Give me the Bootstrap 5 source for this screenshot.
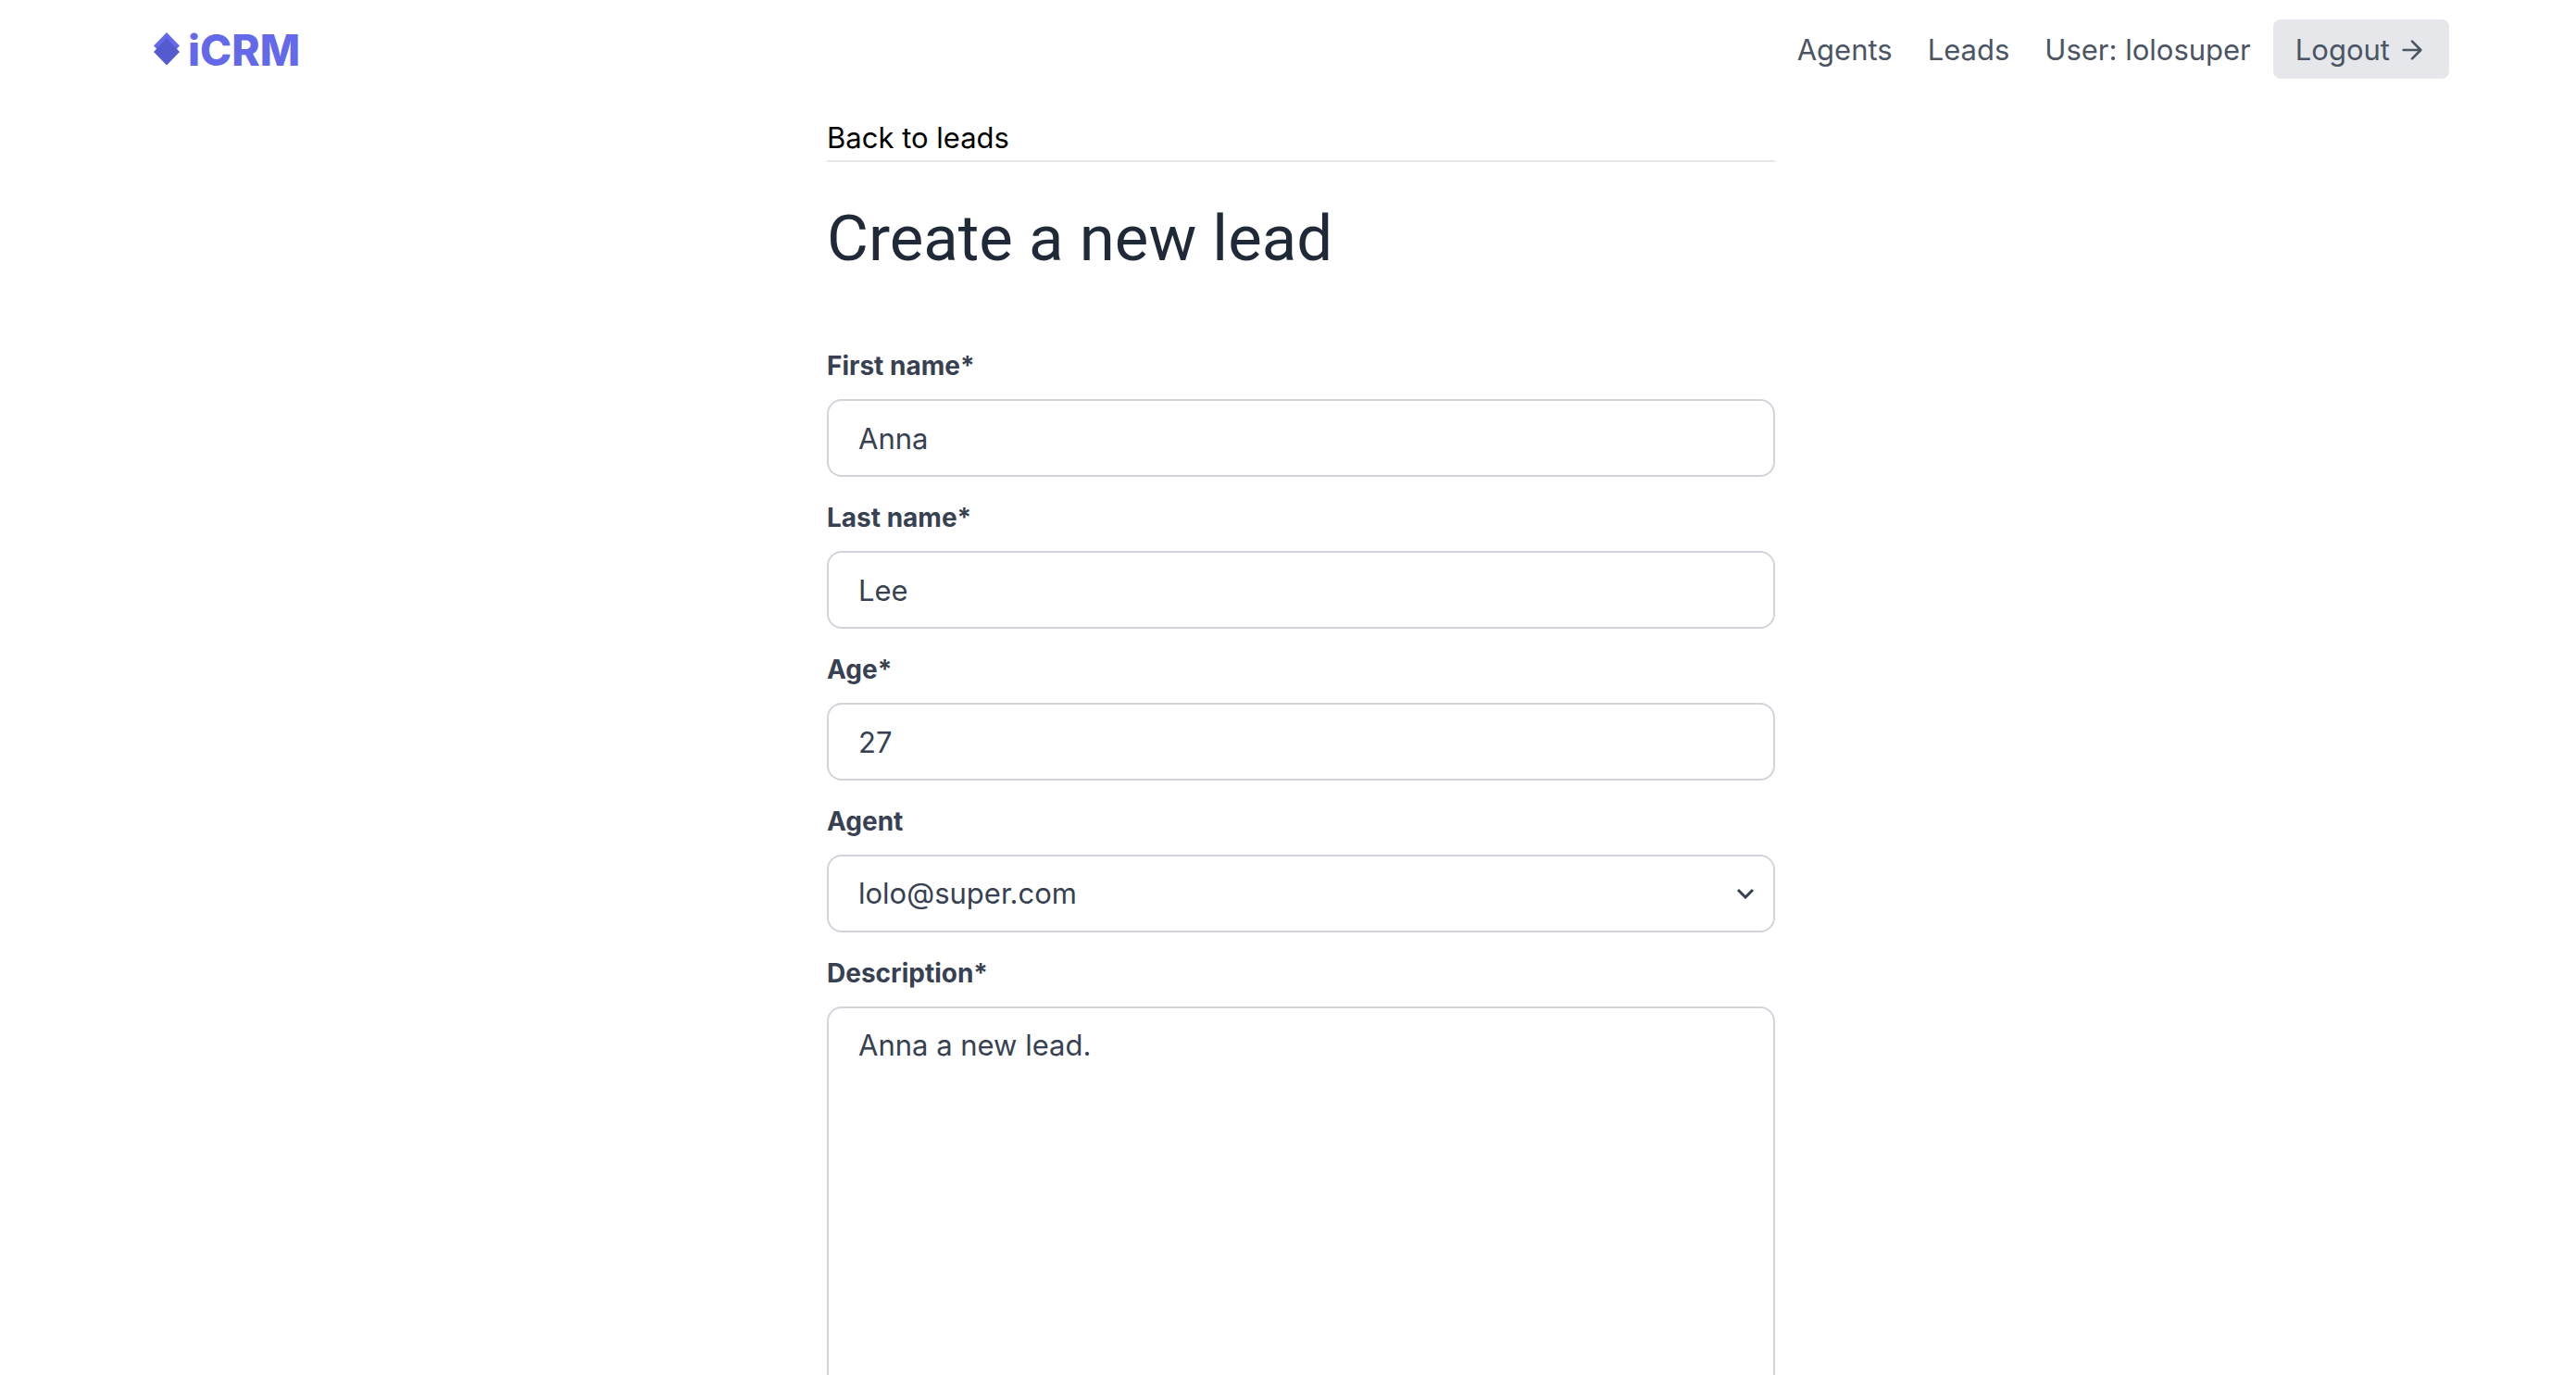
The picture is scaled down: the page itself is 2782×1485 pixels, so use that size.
<!DOCTYPE html>
<html lang="en">
<head>
<meta charset="utf-8">
<meta name="viewport" content="width=device-width, initial-scale=1">
<title>iCRM - Create a new lead</title>
<link href="https://cdn.jsdelivr.net/npm/bootstrap@5.3.0/dist/css/bootstrap.min.css" rel="stylesheet">
<style>
  body { font-family: Inter, "Liberation Sans", sans-serif; font-size: 31px; line-height: 48px; color: #374151; background: #fff; padding-left: 28px; }
  .shell { max-width: 2560px; padding-left: 40px; padding-right: 40px; }
  .site-nav { padding-top: 21px; }
  .brand { gap: 8px; color: #6469e9; font-size: 46px; font-weight: 800; line-height: 64px; }
  .brand span { padding-top: 2px; line-height: 62px; }
  .menu { gap: 38px; }
  .menu a { color: #4b5563; }
  .menu a, .btn-logout { line-height: 48px; padding-top: 9px; padding-bottom: 7px; }
  .btn-logout { --bs-btn-bg: #e5e7eb; --bs-btn-color: #4b5563; --bs-btn-border-width: 0; --bs-btn-hover-bg: #d1d5db; font-size: 31px; padding-left: 24px; padding-right: 24px; border-radius: 8px; gap: 8px; }
  .form-column { max-width: 1024px; padding-top: 40px; }
  .back-row { border-bottom: 2px solid #e5e7eb; }
  h1 { font-family: Roboto, "Liberation Sans", sans-serif; font-size: 69px; font-weight: 400; line-height: 80px; color: #1f2937; margin: 43px 0 76px; }
  .lead-form .form-label { font-size: 28px; font-weight: 700; line-height: 42px; margin-bottom: 15px; display: block; }
  .field { margin-bottom: 23px; }
  .lead-form .form-control, .lead-form .form-select { height: 84px; font-size: 31px; line-height: 48px; padding: 16px 32px; border: 2px solid #d1d5db; border-radius: 16px; color: #374151; }
  .lead-form textarea.form-control { height: auto; resize: none; }
  .lead-form .form-select { background-image: url("data:image/svg+xml,%3Csvg xmlns='http://www.w3.org/2000/svg' viewBox='0 0 20 12'%3E%3Cpath d='M2 2l8 8 8-8' fill='none' stroke='%23374151' stroke-width='3'/%3E%3C/svg%3E"); background-size: 20px 12px; background-position: right 20px center; }
</style>
<script src="https://cdn.jsdelivr.net/npm/bootstrap@5.3.0/dist/js/bootstrap.bundle.min.js"></script>
</head>
<body>
<header class="site-nav">
  <div class="shell mx-auto d-flex align-items-center justify-content-between">
    <a href="#" class="brand d-flex align-items-center text-decoration-none">
      <svg width="30" height="36" viewBox="0 0 30 36" aria-hidden="true"><path d="M15 0l14 14.5L15 29 1 14.5z" fill="#6469e9"/><path d="M15 6.5L29 21 15 35.5 1 21z" fill="#555bcf"/></svg>
      <span>iCRM</span>
    </a>
    <nav class="menu d-flex align-items-center">
      <a class="text-decoration-none" href="#">Agents</a>
      <a class="text-decoration-none" href="#">Leads</a>
      <div class="d-flex align-items-center gap-4">
        <a class="text-decoration-none" href="#">User: lolosuper</a>
        <button type="button" class="btn btn-logout d-flex align-items-center">Logout
          <svg width="32" height="32" viewBox="0 0 24 24" fill="none" stroke="currentColor" stroke-width="2" stroke-linecap="round" stroke-linejoin="round" aria-hidden="true"><path d="M5 12h14M12 5l7 7-7 7"/></svg>
        </button>
      </div>
    </nav>
  </div>
</header>
<main class="form-column mx-auto">
  <div class="back-row"><a href="#" class="text-black text-decoration-none">Back to leads</a></div>
  <h1>Create a new lead</h1>
  <form class="lead-form">
    <div class="field"><label class="form-label" for="first">First name*</label><input id="first" class="form-control" type="text" value="Anna"></div>
    <div class="field"><label class="form-label" for="last">Last name*</label><input id="last" class="form-control" type="text" value="Lee"></div>
    <div class="field"><label class="form-label" for="age">Age*</label><input id="age" class="form-control" type="text" inputmode="numeric" value="27"></div>
    <div class="field"><label class="form-label" for="agent">Agent</label><select id="agent" class="form-select"><option>lolo@super.com</option></select></div>
    <div class="field"><label class="form-label" for="desc">Description*</label><textarea id="desc" class="form-control" rows="10">Anna a new lead.</textarea></div>
  </form>
</main>
</body>
</html>
